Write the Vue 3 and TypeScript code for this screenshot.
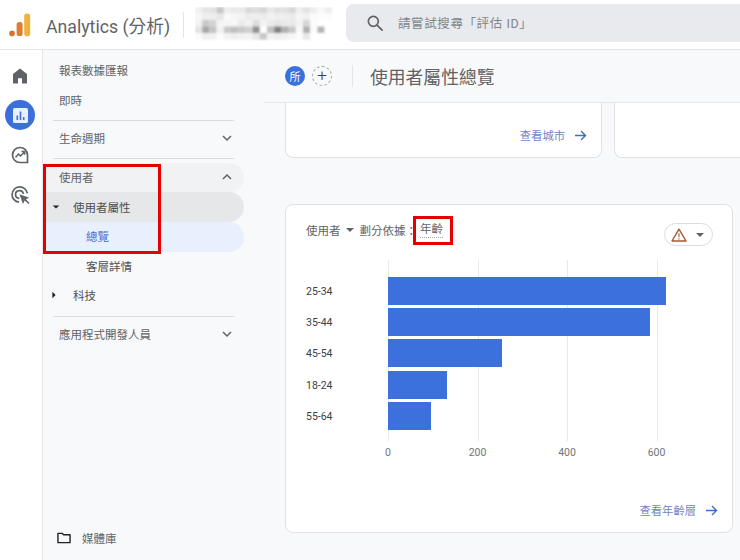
<script setup lang="ts">
interface NavItem { label: string; cls: string; arrow?: 'down' | 'right'; chevron?: 'up' | 'down' }

const mosaic: string[] = [
  'f0 e4 e2 c6 ee e8 ea d8 dc d6 e8 e0 e0 d8 ee e2 ee f8 ee',
  'f6 ee ee e6 fa f6 f4 ec ee ec f2 ee ee ea f4 f2 fa fc fc',
  'f2 c8 d2 f4 f6 f8 ea f2 dc f2 ea e4 ea e8 f2 d6 fc ff ff',
  'e2 a6 c4 f2 c8 c0 c8 d0 90 fc c0 80 b0 c8 f8 b0 fc b4 ff',
  'fa ee f0 fc f2 ee f2 f2 e6 c8 f2 ee f2 f6 fc e8 ff ff ff',
]
const cells = mosaic.flatMap((row, r) =>
  row.split(' ').map((v, c) => ({ key: `${r}-${c}`, x: c * 7.2, y: r * 6.5, fill: `#${v}${v}${v}` })),
)

const nav: NavItem[] = [
  { label: '使用者', cls: 'row group', chevron: 'up' },
  { label: '使用者屬性', cls: 'row sub open', arrow: 'down' },
  { label: '總覽', cls: 'row leaf current' },
  { label: '客層詳情', cls: 'row leaf' },
  { label: '科技', cls: 'row sub', arrow: 'right' },
]

const bars = [
  { label: '25-34', value: 621 },
  { label: '35-44', value: 586 },
  { label: '45-54', value: 254 },
  { label: '18-24', value: 132 },
  { label: '55-64', value: 96 },
]
const ticks = [0, 200, 400, 600]
const pxPerUnit = 268.5 / 600
</script>

<template>
  <div class="app">
    <header class="top">
      <svg class="logo" width="22" height="24" viewBox="0 0 22 24">
        <circle cx="3" cy="20.4" r="2.8" fill="#d9722c" />
        <rect x="7.6" y="9" width="6" height="14" rx="2.6" fill="#dc7f35" />
        <rect x="15.2" y="0.5" width="6" height="22.7" rx="2.8" fill="#efb23c" />
      </svg>
      <span class="brand">Analytics (分析)</span>
      <span class="vline"></span>
      <svg class="mosaic" width="138" height="34" viewBox="0 0 138 34">
        <defs>
          <filter id="soft" x="-5%" y="-10%" width="110%" height="120%"><feGaussianBlur stdDeviation="1.1" /></filter>
        </defs>
        <g filter="url(#soft)">
          <rect v-for="c in cells" :key="c.key" :x="c.x" :y="c.y" width="7.3" height="6.6" :fill="c.fill" />
        </g>
      </svg>
      <div class="search">
        <svg width="20" height="20" viewBox="0 0 24 24" fill="none" stroke="#5f6368" stroke-width="2">
          <circle cx="10" cy="10" r="6" />
          <path d="M14.5 14.5 20.5 20.5" stroke-linecap="round" />
        </svg>
        <span class="placeholder">請嘗試搜尋「評估 ID」</span>
      </div>
    </header>

    <div class="body">
      <aside class="rail">
        <svg class="rail-icon" width="18" height="18" viewBox="0 0 18 18">
          <path d="M9 1.5 2 7v9.5h5v-5.2h4v5.2h5V7z" fill="#5f6368" />
        </svg>
        <span class="rail-active">
          <svg width="15" height="15" viewBox="0 0 15 15">
            <rect width="15" height="15" rx="1.6" fill="#e8f0fe" />
            <path d="M3.5 7.5h1.6v4.5H3.5zM6.7 3.5h1.6V12H6.7zM9.9 9h1.6v3H9.9z" fill="#3b6fdc" />
          </svg>
        </span>
        <svg class="rail-icon" width="20" height="20" viewBox="0 0 20 20" fill="none" stroke="#5f6368" stroke-width="1.7">
          <path d="M17.5 17.5h-7.5a7.5 7.5 0 1 1 7.5-7.5z" />
          <path d="M5.5 12.5 8.5 9l2 2 4-4M11.5 6.5h3.2v3.2" stroke-width="1.5" />
        </svg>
        <svg class="rail-icon" width="20" height="20" viewBox="0 0 20 20" fill="none" stroke="#5f6368" stroke-width="1.7">
          <path d="M9 17.2A7.7 7.7 0 1 1 17.4 8.4" />
          <path d="M9.3 13.4a3.9 3.9 0 1 1 4-4.4" />
          <path d="M9.5 9.3 13 19l1.7-3.6 3.8 3.6 1-1-3.6-3.7 3.4-1.6z" fill="#5f6368" stroke="none" />
        </svg>
      </aside>

      <nav class="side">
        <div class="side-list">
          <div class="row plain">報表數據匯報</div>
          <div class="row plain second">即時</div>
          <hr class="rule rule-a" />
          <div class="row plain section">
            <span>生命週期</span>
            <svg class="chev" width="12" height="12" viewBox="0 0 12 12"><path d="M2 4l4 4 4-4" /></svg>
          </div>
          <hr class="rule rule-b" />
          <div v-for="item in nav" :key="item.label" :class="item.cls">
            <i v-if="item.arrow" :class="['tri', item.arrow]"></i>
            <span>{{ item.label }}</span>
            <svg v-if="item.chevron" class="chev" width="12" height="12" viewBox="0 0 12 12"><path d="M2 8l4-4 4 4" /></svg>
          </div>
          <hr class="rule rule-c" />
          <div class="row plain section">
            <span>應用程式開發人員</span>
            <svg class="chev" width="12" height="12" viewBox="0 0 12 12"><path d="M2 4l4 4 4-4" /></svg>
          </div>
        </div>
        <div class="library">
          <svg width="14" height="12" viewBox="0 0 15 12" fill="none" stroke="#202124" stroke-width="1.5">
            <path d="M1 1h4.5l1.5 1.5h7V11H1z" stroke-linejoin="round" />
          </svg>
          <span>媒體庫</span>
        </div>
        <div class="mark mark-nav"></div>
      </nav>

      <main class="main">
        <div class="page-head">
          <span class="chip">所</span>
          <span class="add">+</span>
          <span class="vline tall"></span>
          <h1>使用者屬性總覽</h1>
        </div>

        <div class="content">
          <div class="card-row">
            <section class="card clipped">
              <a class="link">查看城市 <span class="arrow">
                <svg width="13" height="13" viewBox="0 0 13 13" fill="none" stroke="#3b6fc9" stroke-width="1.4"><path d="M1 6.5h10.5M7 2l4.5 4.5L7 11" /></svg>
              </span></a>
            </section>
            <section class="card clipped blank"></section>
          </div>

          <section class="card age">
            <div class="age-head">
              <div class="crumbs">
                <span>使用者</span>
                <i class="tri down grey"></i>
                <span>劃分依據：</span>
                <span class="dim">年齡
                  <span class="mark mark-dim"></span>
                </span>
              </div>
              <div class="pill">
                <svg width="16" height="14" viewBox="0 0 16 14" fill="none">
                  <path d="M8 1.2 1 13h14z" stroke="#a8572f" stroke-width="1.4" stroke-linejoin="round" />
                  <path d="M8 5.2v4M8 10.2v1.3" stroke="#a8572f" stroke-width="1.1" />
                </svg>
                <i class="tri down dark"></i>
              </div>
            </div>

            <div class="chart">
              <div class="labels">
                <div v-for="b in bars" :key="b.label" class="label">{{ b.label }}</div>
              </div>
              <div class="plot">
                <span
                  v-for="t in ticks" :key="t" class="grid"
                  :style="{ left: t * pxPerUnit + 'px' }"
                ></span>
                <div
                  v-for="b in bars" :key="b.label" class="bar"
                  :style="{ width: b.value * pxPerUnit + 'px' }"
                ></div>
                <span
                  v-for="t in ticks" :key="'t' + t" class="tick"
                  :style="{ left: t * pxPerUnit + 'px' }"
                >{{ t }}</span>
              </div>
            </div>

            <a class="link foot">查看年齡層 <span class="arrow">
              <svg width="13" height="13" viewBox="0 0 13 13" fill="none" stroke="#3b6fc9" stroke-width="1.4"><path d="M1 6.5h10.5M7 2l4.5 4.5L7 11" /></svg>
            </span></a>
          </section>
        </div>
      </main>
    </div>
  </div>
</template>

<style>
html, body { margin: 0; background: #fff; overflow: hidden; }
</style>

<style scoped>
.app {
  width: 740px;
  height: 560px;
  overflow: hidden;
  display: flex;
  flex-direction: column;
  background: #f8f9fa;
  color: #5f6368;
  font-family: Roboto, "Noto Sans CJK TC", sans-serif;
}
.top {
  height: 49px;
  flex: none;
  display: flex;
  align-items: center;
  background: #fff;
  border-bottom: 1px solid #e3e5e8;
  box-sizing: content-box;
}
.logo { margin-left: 9px; margin-top: 1px; flex: none; }
.brand {
  margin-left: 15px;
  font-size: 17.7px;
  color: #5f6368;
  white-space: nowrap;
  width: 125px;
}
.vline { width: 1px; height: 26px; background: #e3e5e8; flex: none; }
.top .vline { margin-left: 12px; }
.mosaic { margin-left: 11px; margin-top: -2px; flex: none; }
.search {
  margin-left: 13px;
  flex: 1;
  height: 38px;
  margin-top: -4px;
  background: #e8eaed;
  border-radius: 8px 0 0 8px;
  display: flex;
  align-items: center;
  padding-left: 19px;
}
.placeholder {
  margin-left: 13px;
  font-size: 12.5px;
  color: #80868b;
  letter-spacing: 0.6px;
  text-spacing-trim: space-all;
}

.body { flex: 1; display: flex; min-height: 0; }
.rail {
  width: 40px;
  padding-right: 2px;
  flex: none;
  background: #fff;
  border-right: 1px solid #e3e5e8;
  display: flex;
  flex-direction: column;
  align-items: center;
  padding-top: 17px;
  box-sizing: content-box;
}
.rail-icon { flex: none; }
.rail-icon:nth-of-type(2) { margin-top: 15px; }
.rail-icon:nth-of-type(3) { margin-top: 20px; }
.rail-active {
  width: 30px;
  height: 30px;
  margin-top: 15px;
  border-radius: 50%;
  background: #3b6fdc;
  display: flex;
  align-items: center;
  justify-content: center;
}

.side {
  width: 221px;
  flex: none;
  position: relative;
  display: flex;
  flex-direction: column;
  justify-content: space-between;
  background: #f8f9fa;
  padding-top: 6px;
  padding-bottom: 14px;
  box-sizing: border-box;
}
.side-list { display: flex; flex-direction: column; padding-right: 20px; }
.row {
  height: 30px;
  flex: none;
  display: flex;
  align-items: center;
  font-size: 11.5px;
  padding-left: 16px;
  padding-bottom: 2px;
  box-sizing: border-box;
  border-radius: 0 16px 16px 0;
  position: relative;
}
.second { height: 29px; }
.rule { width: 181px; height: 1px; border: 0; margin-left: 10px; margin-right: 0; background: #dadce0; flex: none; }
.rule-a { margin-top: 5px; margin-bottom: 3.5px; }
.rule-b { margin-top: 4.5px; margin-bottom: 4px; }
.rule-c { margin-top: 5px; margin-bottom: 3.5px; }
.section { height: 29px; }
.chev { position: absolute; left: 178px; fill: none; stroke: #5f6368; stroke-width: 1.5; }
.group { background: #f1f2f3; height: 29px; }
.sub { padding-left: 30px; color: #4c5054; }
.sub.open { background: #e6e7e9; padding-bottom: 1px; }
.leaf { padding-left: 43px; color: #4c5054; }
.leaf:not(.current) { height: 29px; }
.current { background: #e8f0fe; color: #4a6fd0; }
.tri { display: block; width: 0; height: 0; flex: none; }
.tri.down { border-left: 4px solid transparent; border-right: 4px solid transparent; border-top: 4px solid #202124; }
.tri.right { border-top: 4px solid transparent; border-bottom: 4px solid transparent; border-left: 4px solid #202124; }
.row .tri { position: absolute; left: 9px; transform: scale(0.8); }
.library { display: flex; align-items: center; gap: 11px; padding-left: 14px; font-size: 11.5px; }

.mark { position: absolute; border: 3px solid #e60000; box-sizing: border-box; pointer-events: none; }
.mark-nav { left: 0; top: 114px; width: 118px; height: 90px; }
.mark-dim { left: -7px; right: -10px; top: -6px; height: 29px; }

.main { flex: 1; min-width: 0; display: flex; flex-direction: column; padding-left: 0; }
.page-head {
  height: 52px;
  flex: none;
  display: flex;
  align-items: center;
  padding-left: 21px;
  background: #f8f9fa;
  border-bottom: 1px solid #e6e7e9;
}
.chip {
  width: 20px;
  height: 20px;
  border-radius: 50%;
  background: #3b6fdc;
  color: #fff;
  font-size: 11px;
  display: flex;
  align-items: center;
  justify-content: center;
}
.add {
  width: 18px;
  height: 18px;
  margin-left: 7px;
  border: 1px dashed #9aa0a6;
  border-radius: 50%;
  color: #3c4043;
  font-size: 17px;
  font-weight: 300;
  line-height: 17px;
  text-align: center;
}
.vline.tall { height: 22px; margin-left: 20px; }
h1 { margin: 0 0 0 17px; font-size: 17.8px; font-weight: 400; color: #5f6368; }

.content { flex: 1; padding-left: 21px; min-height: 0; }
.card-row { display: flex; gap: 12px; height: 55px; }
.card {
  background: #fff;
  border: 1px solid #dfe1e5;
  border-radius: 8px;
  box-sizing: border-box;
}
.clipped {
  width: 317px;
  flex: none;
  border-top: 0;
  border-radius: 0 0 8px 8px;
  display: flex;
  align-items: flex-end;
  justify-content: flex-end;
  padding: 0 14px 14px 0;
}
.blank { flex: 1; width: auto; border-right: 0; border-radius: 0 0 0 8px; }
.link {
  display: inline-flex;
  align-items: center;
  font-size: 11.3px;
  color: #6f86c4;
}
.arrow { display: inline-flex; margin-left: 9px; }

.age {
  margin-top: 46px;
  width: 448px;
  height: 329px;
  padding: 18px 20px 0 20px;
  position: relative;
}
.age-head { display: flex; justify-content: space-between; align-items: flex-start; height: 37px; }
.crumbs { display: flex; align-items: center; font-size: 11.5px; height: 14px; }
.crumbs .tri { margin: 0 6px 0 5px; }
.tri.grey { border-top-color: #5f6368; }
.dim {
  position: relative;
  margin-left: 3px;
  border-bottom: 1px dotted #a8adb3;
  line-height: 15px;
}
.pill {
  width: 49px;
  height: 23px;
  margin-right: -1px;
  border: 1px solid #dadce0;
  border-radius: 12px;
  box-sizing: border-box;
  display: flex;
  align-items: center;
  padding-left: 6px;
  gap: 9px;
  background: #fff;
}
.tri.dark { border-top-color: #5f6368; }

.chart { display: flex; }
.labels { width: 82px; padding-top: 18px; flex: none; }
.label {
  height: 31.2px;
  line-height: 28px;
  font-size: 10.5px;
  color: #3c4043;
}
.plot {
  position: relative;
  height: 181px;
  flex: 1;
  padding-top: 17px;
  box-sizing: border-box;
}
.grid { position: absolute; top: 0; bottom: 0; width: 1px; background: #e8e9eb; }
.bar {
  position: relative;
  height: 28px;
  margin-bottom: 3.2px;
  background: #3b70dd;
}
.tick {
  position: absolute;
  top: 186px;
  transform: translateX(-50%);
  font-size: 10.5px;
  color: #70757a;
}
.foot { position: absolute; right: 14px; bottom: 14px; }
</style>
